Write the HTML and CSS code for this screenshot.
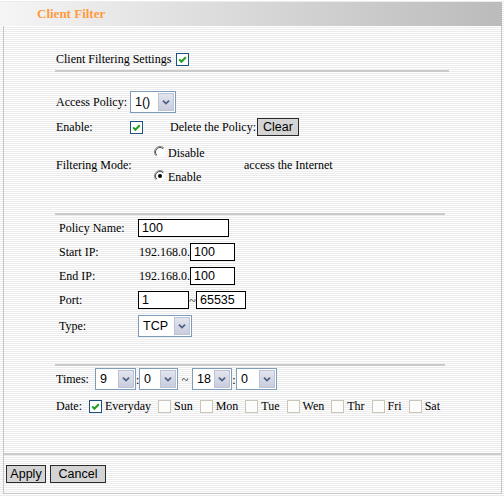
FILE: index.html
```html
<!DOCTYPE html>
<html>
<head>
<meta charset="utf-8">
<title>Client Filter</title>
<link rel="stylesheet" href="styles.css">
</head>
<body>
<div class="header"><span class="title">Client Filter</span></div>
<div class="box">
  <div class="content">
    <div class="row r-head">
      <span>Client Filtering Settings</span>
      <span class="cb cb-head"><svg width="13" height="13" viewBox="0 0 13 13"><rect x="0.5" y="0.5" width="12" height="12" fill="#fff" stroke="#1c5180"/><path d="M3.2 6.4 L5.4 8.7 L9.8 4.2" stroke="#21a121" stroke-width="2" fill="none"/></svg></span>
    </div>
    <div class="sep"></div>

    <div class="row r-policy">
      <span class="lbl-a">Access Policy:</span>
      <span class="sel w46"><select><option>1()</option></select><span class="arr"><svg width="16" height="16" viewBox="0 0 16 16"><path d="M4.5 6.5 L8 9.8 L11.5 6.5" stroke="#4d6185" stroke-width="2" fill="none"/></svg></span></span>
    </div>
    <div class="row r-enable">
      <span class="lbl-a">Enable:</span>
      <span class="cb"><svg width="13" height="13" viewBox="0 0 13 13"><rect x="0.5" y="0.5" width="12" height="12" fill="#fff" stroke="#1c5180"/><path d="M3.2 6.4 L5.4 8.7 L9.8 4.2" stroke="#21a121" stroke-width="2" fill="none"/></svg></span>
      <span class="del">Delete the Policy:</span><button class="btn btn-clear">Clear</button>
    </div>
    <div class="row r-mode">
      <span class="lbl-m">Filtering Mode:</span>
      <div class="radios">
        <div class="rline"><svg class="radio" width="12" height="12" viewBox="0 0 12 12"><circle cx="6" cy="6" r="5.5" fill="#fff"/><path d="M2.1 9.9 A5.5 5.5 0 0 1 9.9 2.1" stroke="#8a8a8a" fill="none"/><path d="M2.8 9.2 A4.5 4.5 0 0 1 9.2 2.8" stroke="#4a4a4a" fill="none"/></svg><span>Disable</span></div>
        <div class="rline"><svg class="radio" width="12" height="12" viewBox="0 0 12 12"><circle cx="6" cy="6" r="5.5" fill="#fff"/><path d="M2.1 9.9 A5.5 5.5 0 0 1 9.9 2.1" stroke="#8a8a8a" fill="none"/><path d="M2.8 9.2 A4.5 4.5 0 0 1 9.2 2.8" stroke="#4a4a4a" fill="none"/><circle cx="6" cy="6" r="2" fill="#000"/></svg><span>Enable</span></div>
      </div>
      <span>access the Internet</span>
    </div>
    <div class="sep sep2"></div>

    <div class="row r-sec r-first">
      <span class="lbl-b">Policy Name:</span>
      <input class="txt w91" type="text" value="100">
    </div>
    <div class="row r-sec">
      <span class="lbl-b">Start IP:</span>
      <span class="ip">192.168.0.</span><input class="txt w45" type="text" value="100">
    </div>
    <div class="row r-sec">
      <span class="lbl-b">End IP:</span>
      <span class="ip">192.168.0.</span><input class="txt w45" type="text" value="100">
    </div>
    <div class="row r-sec">
      <span class="lbl-b">Port:</span>
      <input class="txt w51" type="text" value="1"><span class="tilde">~</span><input class="txt w50" type="text" value="65535">
    </div>
    <div class="row r-sec r-type">
      <span class="lbl-b">Type:</span>
      <span class="sel w54"><select><option>TCP</option></select><span class="arr"><svg width="16" height="16" viewBox="0 0 16 16"><path d="M4.5 6.5 L8 9.8 L11.5 6.5" stroke="#4d6185" stroke-width="2" fill="none"/></svg></span></span>
    </div>
    <div class="sep sep3"></div>

    <div class="row r-times">
      <span class="lbl-t">Times:</span>
      <span class="sel w41"><select><option>9</option></select><span class="arr"><svg width="16" height="16" viewBox="0 0 16 16"><path d="M4.5 6.5 L8 9.8 L11.5 6.5" stroke="#4d6185" stroke-width="2" fill="none"/></svg></span></span>
      <span class="colon">:</span>
      <span class="sel w39"><select><option>0</option></select><span class="arr"><svg width="16" height="16" viewBox="0 0 16 16"><path d="M4.5 6.5 L8 9.8 L11.5 6.5" stroke="#4d6185" stroke-width="2" fill="none"/></svg></span></span>
      <span class="tl">~</span>
      <span class="sel w40"><select><option>18</option></select><span class="arr"><svg width="16" height="16" viewBox="0 0 16 16"><path d="M4.5 6.5 L8 9.8 L11.5 6.5" stroke="#4d6185" stroke-width="2" fill="none"/></svg></span></span>
      <span class="colon c2">:</span>
      <span class="sel w41"><select><option>0</option></select><span class="arr"><svg width="16" height="16" viewBox="0 0 16 16"><path d="M4.5 6.5 L8 9.8 L11.5 6.5" stroke="#4d6185" stroke-width="2" fill="none"/></svg></span></span>
    </div>
    <div class="row r-date">
      <span class="lbl-d">Date:</span>
      <span class="cb day first"><svg width="13" height="13" viewBox="0 0 13 13"><rect x="0.5" y="0.5" width="12" height="12" fill="#fff" stroke="#1c5180"/><path d="M3.2 6.4 L5.4 8.7 L9.8 4.2" stroke="#21a121" stroke-width="2" fill="none"/></svg></span><span>Everyday</span>
      <span class="cb day"><svg width="13" height="13" viewBox="0 0 13 13"><rect x="0.5" y="0.5" width="12" height="12" fill="#fcfcfa" stroke="#c9c7ba"/></svg></span><span>Sun</span>
      <span class="cb day"><svg width="13" height="13" viewBox="0 0 13 13"><rect x="0.5" y="0.5" width="12" height="12" fill="#fcfcfa" stroke="#c9c7ba"/></svg></span><span>Mon</span>
      <span class="cb day"><svg width="13" height="13" viewBox="0 0 13 13"><rect x="0.5" y="0.5" width="12" height="12" fill="#fcfcfa" stroke="#c9c7ba"/></svg></span><span>Tue</span>
      <span class="cb day"><svg width="13" height="13" viewBox="0 0 13 13"><rect x="0.5" y="0.5" width="12" height="12" fill="#fcfcfa" stroke="#c9c7ba"/></svg></span><span>Wen</span>
      <span class="cb day"><svg width="13" height="13" viewBox="0 0 13 13"><rect x="0.5" y="0.5" width="12" height="12" fill="#fcfcfa" stroke="#c9c7ba"/></svg></span><span>Thr</span>
      <span class="cb day"><svg width="13" height="13" viewBox="0 0 13 13"><rect x="0.5" y="0.5" width="12" height="12" fill="#fcfcfa" stroke="#c9c7ba"/></svg></span><span>Fri</span>
      <span class="cb day"><svg width="13" height="13" viewBox="0 0 13 13"><rect x="0.5" y="0.5" width="12" height="12" fill="#fcfcfa" stroke="#c9c7ba"/></svg></span><span>Sat</span>
    </div>
  </div>
  <div class="actions">
    <button class="btn btn-apply">Apply</button>
    <button class="btn btn-cancel">Cancel</button>
  </div>
</div>
</body>
</html>
```
FILE: styles.css
```css
html, body {
  margin: 0;
  padding: 0;
}
body {
  width: 504px;
  height: 497px;
  overflow: hidden;
  box-sizing: border-box;
  padding-top: 2px;
  background: repeating-linear-gradient(to bottom, #ffffff 0px, #ffffff 1px, #ebebeb 1px, #ebebeb 2px);
  font-family: "Liberation Serif", "Times New Roman", serif;
  font-size: 12px;
  color: #000;
}
.header {
  height: 24px;
  width: 502px;
  box-sizing: border-box;
  padding-left: 37px;
  display: flex;
  align-items: center;
  background: linear-gradient(to right, #f5f5f5, #bbbbbb);
}
.title {
  font-weight: bold;
  font-size: 13px;
  color: #ff9b3f;
}
.box {
  margin-left: 3px;
  width: 499px;
  height: 468px;
  box-sizing: border-box;
  border: 1px solid #c6c6c6;
  border-top: none;
  display: flex;
  flex-direction: column;
}
.content {
  height: 427px;
  box-sizing: border-box;
  padding: 26px 0 0 52px;
}
.actions {
  border-top: 2px solid #cbcbcb;
  padding: 10px 0 0 2px;
  display: flex;
  gap: 4px;
}
.row {
  display: flex;
  align-items: center;
  white-space: nowrap;
}
.r-head {
  height: 14px;
}
.cb {
  display: inline-flex;
  width: 13px;
  height: 13px;
}
.cb svg {
  display: block;
}
.cb-head {
  margin-left: 5px;
}
.sep {
  width: 394px;
  height: 2px;
  background: #cacaca;
  margin: 4px 0 0 -1px;
}
.sep2 {
  margin-top: 24px;
  width: 390px;
}
.sep3 {
  margin-top: 27px;
  width: 390px;
}
.r-policy {
  margin-top: 19px;
  height: 22px;
}
.lbl-a {
  width: 74px;
}
.sel {
  display: inline-flex;
  box-sizing: border-box;
  height: 22px;
  border: 1px solid #7f9db9;
  background: #fff;
  padding: 1px;
}
.sel select {
  -webkit-appearance: none;
  appearance: none;
  border: none;
  outline: none;
  background: transparent;
  margin: 0;
  padding: 0 0 0 3px;
  flex: 1;
  min-width: 0;
  font-family: "Liberation Sans", Arial, sans-serif;
  font-size: 12.5px;
  color: #000;
}
.arr {
  width: 16px;
  box-sizing: border-box;
  border: 1px solid #bcc4d8;
  background: linear-gradient(to bottom, #e2e5ee, #c9cddc);
  display: flex;
  align-items: center;
  justify-content: center;
}
.arr svg {
  display: block;
}
.w46 { width: 46px; }
.w54 { width: 54px; }
.w41 { width: 41px; }
.w39 { width: 39px; }
.w40 { width: 40px; }
.r-enable {
  margin-top: 5px;
  height: 18px;
}
.del {
  margin-left: 27px;
}
.btn {
  box-sizing: border-box;
  height: 18px;
  margin: 0;
  padding: 0;
  border: 1px solid #2b2b2b;
  background: #d4d4d4;
  font-family: "Liberation Sans", Arial, sans-serif;
  font-size: 12.5px;
  color: #000;
  line-height: 16px;
}
.btn-clear {
  width: 42px;
  margin-left: 1px;
}
.btn-apply {
  width: 40px;
}
.btn-cancel {
  width: 56px;
}
.r-mode {
  margin-top: 5px;
  height: 48px;
}
.lbl-m {
  width: 98px;
}
.radios {
  width: 90px;
  display: flex;
  flex-direction: column;
}
.rline {
  height: 24px;
  display: flex;
  align-items: center;
}
.radio {
  display: block;
  margin-right: 2px;
  margin-top: -2px;
}
.r-sec {
  padding-left: 3px;
  height: 18px;
  margin-top: 6px;
}
.r-first {
  margin-top: 4px;
}
.r-type {
  height: 22px;
}
.lbl-b {
  width: 79px;
}
.txt {
  box-sizing: border-box;
  height: 18px;
  margin: 0;
  padding: 0 3px;
  border: 1px solid #000;
  background: #fff;
  font-family: "Liberation Sans", Arial, sans-serif;
  font-size: 12.5px;
  color: #000;
  outline: none;
}
.w91 { width: 91px; }
.w45 { width: 45px; }
.w51 { width: 51px; }
.w50 { width: 50px; }
.ip {
  padding-left: 1px;
}
.tilde {
  width: 7px;
  text-align: center;
  padding-top: 3px;
}
.r-times {
  margin-top: 2px;
  height: 22px;
}
.lbl-t {
  width: 39px;
}
.colon {
  width: 3px;
  text-align: center;
  padding-top: 3px;
}
.c2 {
  width: 4px;
}
.tl {
  width: 14px;
  text-align: center;
  padding-top: 3px;
}
.r-date {
  margin-top: 9px;
  height: 14px;
}
.lbl-d {
  width: 33px;
}
.day {
  margin-left: 7px;
  margin-right: 3px;
}
.day.first {
  margin-left: 0;
}
```
